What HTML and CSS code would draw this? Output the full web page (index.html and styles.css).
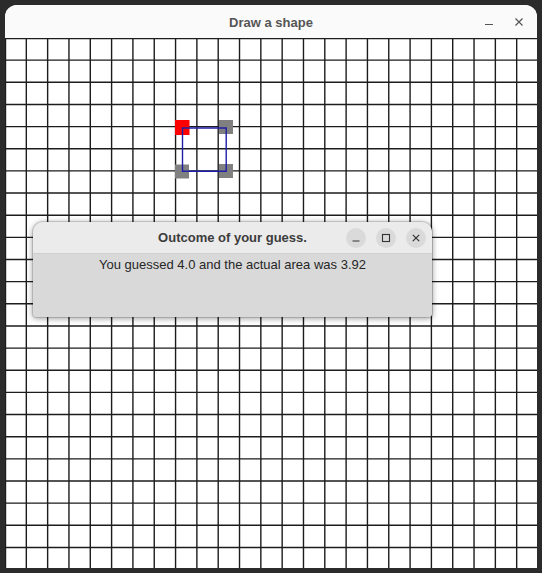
FILE: index.html
```html
<!DOCTYPE html>
<html lang="en">
<head>
    <meta charset="UTF-8">
    <meta name="viewport" content="width=device-width, initial-scale=1.0">
    <title>Draw a shape</title>
    <link rel="stylesheet" href="styles.css">
</head>
<body>
    <div class="desktop">
        <div class="window">
            <div class="titlebar">
                <span></span>
                <h1 class="title">Draw a shape</h1>
                <div class="win-controls">
                    <svg class="win-btn" width="16" height="16" viewBox="0 0 16 16">
                        <path d="M4 10.5 H12" stroke="#555" stroke-width="1.2" fill="none"/>
                    </svg>
                    <svg class="win-btn" width="16" height="16" viewBox="0 0 16 16">
                        <path d="M4.5 4.5 L11.5 11.5 M11.5 4.5 L4.5 11.5" stroke="#555" stroke-width="1.2" fill="none"/>
                    </svg>
                </div>
            </div>

            <!-- drawing canvas: 25 x 24 grid, points and the guessed shape -->
            <svg class="canvas" width="533" height="532" viewBox="0 0 533 532">
                <rect width="533" height="532" fill="#fff"/>
                <g stroke="#1c1c1c" stroke-width="1.4">
                    <path d="M0.5 0 V532 M21.32 0 V532 M42.64 0 V532 M63.96 0 V532 M85.28 0 V532 M106.6 0 V532 M127.92 0 V532 M149.24 0 V532 M170.56 0 V532 M191.88 0 V532 M213.2 0 V532 M234.52 0 V532 M255.84 0 V532 M277.16 0 V532 M298.48 0 V532 M319.8 0 V532 M341.12 0 V532 M362.44 0 V532 M383.76 0 V532 M405.08 0 V532 M426.4 0 V532 M447.72 0 V532 M469.04 0 V532 M490.36 0 V532 M511.68 0 V532"/>
                    <path d="M0 0.5 H533 M0 22.15 H533 M0 44.3 H533 M0 66.45 H533 M0 88.6 H533 M0 110.75 H533 M0 132.9 H533 M0 155.05 H533 M0 177.2 H533 M0 199.35 H533 M0 221.5 H533 M0 243.65 H533 M0 265.8 H533 M0 287.95 H533 M0 310.1 H533 M0 332.25 H533 M0 354.4 H533 M0 376.55 H533 M0 398.7 H533 M0 420.85 H533 M0 443 H533 M0 465.15 H533 M0 487.3 H533 M0 509.45 H533"/>
                </g>
                <rect x="170" y="82" width="14.5" height="15" fill="#ff0000"/>
                <rect x="214" y="82" width="14" height="14" fill="#808080"/>
                <rect x="170" y="126.5" width="14" height="14" fill="#808080"/>
                <rect x="214" y="126" width="14" height="14" fill="#808080"/>
                <path d="M177.5 90 H221.2 V133.2 H177.5 Z" stroke="#1e1ea6" stroke-width="1.4" fill="none"/>
            </svg>
        </div>

        <div class="dialog">
            <div class="dialog-head">
                <span></span>
                <h2 class="dialog-title">Outcome of your guess.</h2>
                <div class="dialog-controls">
                    <span class="round-btn">
                        <svg width="20" height="20" viewBox="0 0 20 20"><path d="M6.5 13 H13.5" stroke="#333" stroke-width="1.2"/></svg>
                    </span>
                    <span class="round-btn">
                        <svg width="20" height="20" viewBox="0 0 20 20"><rect x="6.5" y="6.5" width="7" height="7" stroke="#333" stroke-width="1.1" fill="none"/></svg>
                    </span>
                    <span class="round-btn">
                        <svg width="20" height="20" viewBox="0 0 20 20"><path d="M6.8 6.8 L13.2 13.2 M13.2 6.8 L6.8 13.2" stroke="#333" stroke-width="1.2"/></svg>
                    </span>
                </div>
            </div>
            <div class="dialog-body">
                <p class="message">You guessed 4.0 and the actual area was 3.92</p>
            </div>
        </div>
    </div>
</body>
</html>
```

FILE: styles.css
```css
* {
    box-sizing: border-box;
    margin: 0;
    padding: 0;
}

body {
    background-color: #2b2b2b;
    font-family: 'Liberation Sans', Arial, sans-serif;
    width: 542px;
    height: 573px;
    overflow: hidden;
}

.desktop {
    position: relative;
    width: 542px;
    height: 573px;
    padding: 5px 0 0 5px;
    background-color: #2b2b2b;
}

.window {
    width: 532px;
    height: 563px;
    background: #fff;
    border-radius: 12px 12px 0 0;
    overflow: hidden;
}

.titlebar {
    height: 33px;
    background-color: #fafafa;
    display: grid;
    grid-template-columns: 1fr auto 1fr;
    align-items: center;
}

.title {
    font-size: 13px;
    font-weight: bold;
    color: #555;
    padding-top: 1px;
}

.win-controls {
    display: flex;
    justify-content: flex-end;
    gap: 14px;
    padding-right: 10px;
}

.win-btn {
    display: block;
}

.canvas {
    display: block;
}

/* dialog floating over the canvas */
.dialog {
    position: absolute;
    left: 33px;
    top: 222px;
    width: 399px;
    height: 95px;
    border-radius: 10px 10px 3px 3px;
    overflow: hidden;
    background-color: #d9d9d9;
    box-shadow: 0 1px 6px rgba(0, 0, 0, 0.45), 0 0 0 1px rgba(0, 0, 0, 0.12);
}

.dialog-head {
    height: 32px;
    background-color: #ebebeb;
    border-bottom: 1px solid #d0d0d0;
    display: grid;
    grid-template-columns: 1fr auto 1fr;
    align-items: center;
}

.dialog-title {
    font-size: 13px;
    font-weight: bold;
    color: #3c3c3c;
}

.dialog-controls {
    display: flex;
    justify-content: flex-end;
    gap: 10px;
    padding-right: 6px;
}

.round-btn {
    width: 20px;
    height: 20px;
    border-radius: 50%;
    background-color: #dadada;
    display: flex;
    align-items: center;
    justify-content: center;
}

.round-btn svg {
    display: block;
}

.dialog-body {
    padding-top: 2px;
    text-align: center;
}

.message {
    font-size: 13px;
    line-height: 17px;
    color: #262626;
}
```
